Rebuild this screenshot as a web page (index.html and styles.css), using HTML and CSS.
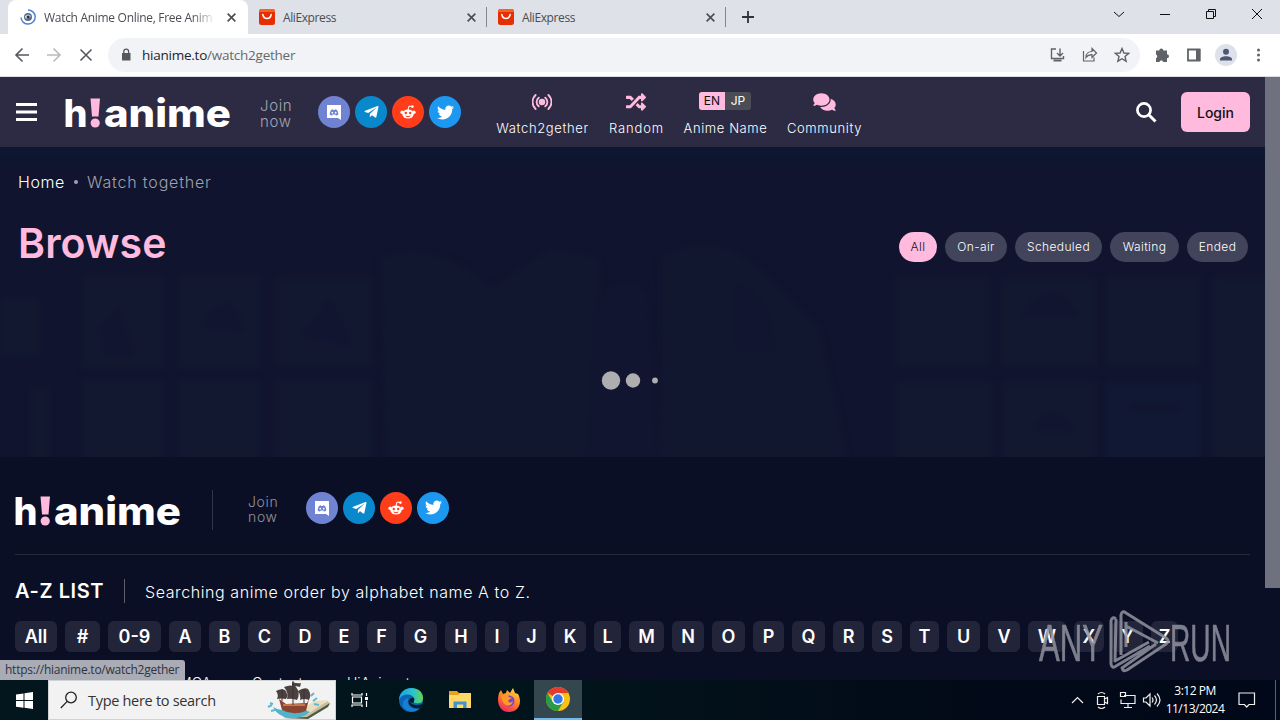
FILE: index.html
```html
<!DOCTYPE html>
<html lang="en">
<head>
<meta charset="utf-8">
<title>Watch together</title>
<link rel="stylesheet" href="styles.css">
</head>
<body>
<svg class="defs" width="0" height="0">
  <symbol id="twitter" viewBox="0 0 512 512"><path d="M459.37 151.716c.325 4.548.325 9.097.325 13.645 0 138.72-105.583 298.558-298.558 298.558-59.452 0-114.68-17.219-161.137-47.106 8.447.974 16.568 1.299 25.34 1.299 49.055 0 94.213-16.568 130.274-44.832-46.132-.975-84.792-31.188-98.112-72.772 6.498.974 12.995 1.624 19.818 1.624 9.421 0 18.843-1.3 27.614-3.573-48.081-9.747-84.143-51.98-84.143-102.985v-1.299c13.969 7.797 30.214 12.67 47.431 13.319-28.264-18.843-46.781-51.005-46.781-87.391 0-19.492 5.197-37.36 14.294-52.954 51.655 63.675 129.3 105.258 216.365 109.807-1.624-7.797-2.599-15.918-2.599-24.04 0-57.828 46.782-104.934 104.934-104.934 30.213 0 57.502 12.67 76.67 33.137 23.715-4.548 46.456-13.32 66.599-25.34-7.798 24.366-24.366 44.833-46.132 57.827 21.117-2.273 41.584-8.122 60.426-16.243-14.292 20.791-32.161 39.308-52.628 54.253z"/></symbol>
  <symbol id="telegram" viewBox="0 0 448 512"><path d="M446.7 98.6l-67.6 318.8c-5.1 22.5-18.4 28.1-37.3 17.5l-103-75.9-49.7 47.8c-5.5 5.500-10.100 10.100-20.700 10.100l7.400-104.900 190.900-172.500c8.300-7.400-1.800-11.500-12.900-4.100L117.800 284 16.200 252.200c-22.100-6.900-22.500-22.100 4.600-32.700L418.200 66.400c18.400-6.900 34.500 4.100 28.500 32.200z"/></symbol>
  <symbol id="reddit" viewBox="0 0 16 16"><ellipse cx="8" cy="10" rx="5.7" ry="4.5"/><circle cx="2.100" cy="8.300" r="1.700"/><circle cx="13.900" cy="8.300" r="1.700"/><path d="M8 6l1-4 3 .7" fill="none" stroke="#fff"/><circle cx="12.400" cy="2.600" r="1.300"/><circle cx="5.800" cy="9" r="1.200" fill="#ff3d1b"/><circle cx="10.200" cy="9" r="1.200" fill="#ff3d1b"/><path d="M5.600 12q2.400 1.500 4.800 0" fill="none" stroke="#ff3d1b"/></symbol>
  <symbol id="discord" viewBox="0 0 16 16"><path d="M1 1h14v15l-3-2H1z"/><path d="M3.700 10.500c0-3 1-5 3-5.300l.6.800h1.400l.6-.8c2 .3 3 2.300 3 5.300-1 .9-1.700 1-2.400 1l-.6-1H6.700l-.6 1c-.7 0-1.400-.1-2.400-1z" fill="#7083d3"/><circle cx="6.300" cy="8.700" r=".9"/><circle cx="9.700" cy="8.700" r=".9"/></symbol>
  <symbol id="ali" viewBox="0 0 16 16"><rect width="16" height="16" rx="2.500" fill="#e62e04"/><path d="M0 3V2.500A2.500 2.500 0 0 1 2.500 0h11A2.500 2.500 0 0 1 16 2.500V3z" fill="#f8641a"/><path d="M3.800 5.500c1 5.300 7.400 5.300 8.400 0" fill="none" stroke="#fff" stroke-width="1.500" stroke-linecap="round"/></symbol>
  <symbol id="x" viewBox="0 0 10 10"><path d="M1.500 1.500l7 7m0-7l-7 7" fill="none" stroke="#4a4d51" stroke-width="1.500"/></symbol>
  <symbol id="logo" viewBox="0 0 166 34">
    <text class="logo-text" y="30" fill="#fff" x="-1.500" textLength="24" lengthAdjust="spacingAndGlyphs">h</text>
    <path d="M25.500 1.500H35l-1.500 18h-6.500z" fill="#ffbade"/><circle cx="30.200" cy="26" r="4.600" fill="#ffbade"/>
    <text class="logo-text" y="30" fill="#fff" x="39" textLength="127" lengthAdjust="spacingAndGlyphs">anime</text>
  </symbol>
</svg>

<div class="tabs">
  <div class="tab tab-active">
    <svg width="16" height="16" viewBox="0 0 16 16" fill="none"><path d="M8 .9A7.100 7.100 0 1 1 1 8.500" stroke="#4e84d8" stroke-width="1.500"/><circle cx="8" cy="8" r="4" fill="#5b6a83"/><path d="M5 7q3-3 6 0-2 4-6 2z" fill="#c4cfe0"/><circle cx="8.200" cy="8" r="1.500" fill="#26303f"/></svg>
    <span class="tab-title t-watch">Watch Anime Online, Free Anim</span>
    <svg class="tab-x" width="11" height="11"><use href="#x"/></svg>
  </div>
  <div class="tab">
    <svg width="16" height="16"><use href="#ali"/></svg><span class="tab-title">AliExpress</span><svg class="tab-x" width="11" height="11"><use href="#x"/></svg>
  </div>
  <div class="tab">
    <svg width="16" height="16"><use href="#ali"/></svg><span class="tab-title">AliExpress</span><svg class="tab-x" width="11" height="11"><use href="#x"/></svg>
  </div>
  <svg class="plus" width="12" height="12" viewBox="0 0 12 12"><path d="M6 0v12M0 6h12" stroke="#303236" stroke-width="1.800"/></svg>
  <svg class="winctl" width="160" height="30" viewBox="0 0 160 30" fill="none" stroke="#111"><path d="M4 12l5 4.500 5-4.500M50 14.500h10M96.500 11.500h7v7h-7zM98.500 11.500v-2h7v7h-2M142 9l10 10m0-10l-10 10"/></svg>
</div>

<div class="toolbar">
  <svg width="90" height="20" viewBox="0 0 90 20" fill="none" stroke-width="1.600"><path d="M15 10H2m6.500-6.500L2 10l6.500 6.500" stroke="#55585c"/><path d="M33 10h13m-6.500-6.500L46 10l-6.500 6.500" stroke="#b9bbbe"/><path d="M66.500 4.500L77.500 15.500M77.500 4.500L66.500 15.500" stroke="#55585c"/></svg>
  <div class="address">
    <svg width="10" height="14" viewBox="0 0 10 14"><path d="M1 5h8.500v7.500H1z" fill="#55585d"/><path d="M2.800 5V3.500a2.400 2.400 0 0 1 4.800 0V5" fill="none" stroke="#55585d" stroke-width="1.300"/></svg>
    <span class="url"><b>hianime.to</b>/watch2gether</span>
    <svg class="address-icons" width="80" height="18" viewBox="0 0 80 18" fill="none" stroke="#5f6368" stroke-width="1.400"><path d="M6 3H1.500v9.500h12V10M10 2.500v7M7 7l3 3 3-3"/><path d="M3.500 14.500h8" stroke-width="2"/><path d="M33.500 5v10H44v-3.500M36 11.500c0-4 3-6 6-6V2.500L46.500 7 42 11.500V8.600c-2.500 0-4.500.7-6 2.900z" stroke-width="1.200"/><path d="M72 2.500l1.900 4.500 4.800.4-3.700 3.100 1.100 4.700-4.100-2.500-4.100 2.500 1.100-4.700-3.700-3.100 4.800-.4z"/></svg>
  </div>
  <svg class="ext" width="114" height="22" viewBox="0 0 114 22"><path d="M2 6.500h3.300a2 2 0 1 1 4 0H13v3.700a2 2 0 1 1 0 4V18H9.200a2 2 0 0 0-3.800 0H2v-3.800a2 2 0 0 0 0-3.700z" fill="#5f6368"/><path d="M34 5.500h11.500v11H34z" fill="none" stroke="#5f6368" stroke-width="1.800"/><path d="M42 5h4.500v12H42z" fill="#5f6368"/><circle cx="72" cy="11" r="11" fill="#dee1e9"/><circle cx="72" cy="7.700" r="3" fill="#4e5676"/><path d="M66 16.500v-1.200c0-4 12-4 12 0v1.200z" fill="#4e5676"/><g fill="#5f6368"><circle cx="104.500" cy="6" r="1.500"/><circle cx="104.500" cy="11" r="1.500"/><circle cx="104.500" cy="16" r="1.500"/></g></svg>
</div>

<div class="view">
  <div class="page">
    <header class="header">
      <svg class="burger" width="22" height="18" viewBox="0 0 22 18"><path d="M0 1.500h21M0 9h21M0 16.500h21" stroke="#fff" stroke-width="3"/></svg>
      <svg class="logo" width="166" height="34"><use href="#logo"/></svg>
      <div class="join">Join<br>now</div>
      <div class="social">
        <i class="dot discord"><svg width="16" height="16"><use href="#discord"/></svg></i>
        <i class="dot telegram"><svg width="15" height="16"><use href="#telegram"/></svg></i>
        <i class="dot reddit"><svg width="16" height="16"><use href="#reddit"/></svg></i>
        <i class="dot twitter"><svg width="17" height="17"><use href="#twitter"/></svg></i>
      </div>
      <nav class="menu">
        <div class="menu-item m1"><svg width="20" height="18" viewBox="0 0 20 18" fill="none" stroke="#ffbade" stroke-width="1.900" stroke-linecap="round"><circle cx="10" cy="9" r="2.300" fill="#ffbade"/><path d="M6.700 4.700a5.500 5.500 0 0 0 0 8.600M13.300 4.700a5.500 5.500 0 0 1 0 8.600M3.600 2a9.500 9.500 0 0 0 0 14M16.400 2a9.500 9.500 0 0 1 0 14"/></svg><span>Watch2gether</span></div>
        <div class="menu-item m2"><svg width="20" height="20" viewBox="0 0 512 512" fill="#ffbade"><path d="M504.971 359.029c9.373 9.373 9.373 24.569 0 33.941l-80 79.984c-15.010 15.010-40.971 4.490-40.971-16.971V416h-58.785a12.004 12.004 0 0 1-8.773-3.812l-70.556-75.596 53.333-57.143L352 336h32v-39.981c0-21.438 25.943-31.998 40.971-16.971l80 79.981zM12 176h84l52.781 56.551 53.333-57.143-70.556-75.596A11.999 11.999 0 0 0 122.785 96H12c-6.627 0-12 5.373-12 12v56c0 6.627 5.373 12 12 12zm372 0v39.984c0 21.460 25.961 31.980 40.971 16.971l80-79.984c9.373-9.373 9.373-24.569 0-33.941l-80-79.981C409.943 24.021 384 34.582 384 56.019V96h-58.785a12.004 12.004 0 0 0-8.773 3.812L96 336H12c-6.627 0-12 5.373-12 12v56c0 6.627 5.373 12 12 12h110.785c3.326 0 6.503-1.381 8.773-3.812L352 176h32z"/></svg><span>Random</span></div>
        <div class="menu-item m3"><div class="lang"><b>EN</b><em>JP</em></div><span>Anime Name</span></div>
        <div class="menu-item m4"><svg width="23" height="20" viewBox="0 0 576 512" fill="#ffbade"><path d="M416 192c0-88.400-93.100-160-208-160S0 103.600 0 192c0 34.300 14.100 65.900 38 92-13.400 30.200-35.500 54.200-35.800 54.500-2.200 2.300-2.800 5.700-1.500 8.700S4.800 352 8 352c36.600 0 66.900-12.300 88.700-25 32.200 15.700 70.300 25 111.300 25 114.900 0 208-71.600 208-160zm122 220c23.900-26 38-57.700 38-92 0-66.900-53.500-124.200-129.300-148.100.9 6.600 1.300 13.300 1.300 20.100 0 105.900-107.700 192-240 192-10.800 0-21.300-.8-31.700-1.900C207.800 439.600 281.800 480 368 480c41 0 79.100-9.200 111.300-25 21.800 12.700 52.100 25 88.700 25 3.200 0 6.100-1.900 7.300-4.800 1.300-2.900.7-6.300-1.500-8.700-.3-.3-22.400-24.200-35.800-54.500z"/></svg><span>Community</span></div>
      </nav>
      <svg class="search" width="21" height="21" viewBox="0 0 21 21" fill="none" stroke="#fff"><circle cx="8" cy="8" r="6.600" stroke-width="2.700"/><path d="M12.500 12.500l7 7" stroke-width="3"/></svg>
      <div class="login">Login</div>
    </header>

    <main class="browse">
      <svg class="tiles" width="1265" height="310" viewBox="0 0 1265 310">
        <path d="M-5-5h1275v19H-5z" fill="#0d1731"/>
        <g fill="#131831">
          <path d="M82 126h82v96H82zM178 126h83v96h-83zM82 232h82v85H82zM178 232h83v85h-83zM895 128h96v92h-96zM1000 130h98v90h-98zM1106 128h94v92h-94zM1212 130h60v187h-60zM895 234h98v83h-98zM1002 234h96v83h-96zM0 150h40v60H0zM30 240h20v80H30z"/>
          <path d="M273 130h100v90H273zM273 232h100v85H273z"/>
          <path d="M380 110q60-20 110 30l60-40 50 10 10 210H385zM660 110q50-30 100 10l60 60 30 137H660z" opacity=".7"/>
          <path d="M1104 234h97v83h-97z" fill="#101833"/>
        </g>
        <g fill="#111530"><path d="M100 180l20-20 15 50h-30zM200 180q30-50 45 5zM1020 170q30-50 60 0zM300 190l30-40 25 50zM1030 285q25-40 45 0zM1130 255h50v10h-50zM600 150q25-35 50 0l10 170h-70zM740 140q30 20 30 60h-30z"/></g>
      </svg>
      <div class="crumbs"><span class="home">Home</span><i></i><span class="here">Watch together</span></div>
      <div class="title-row">
        <h1>Browse</h1>
        <div class="pills"><span class="pill on" style="width:38px">All</span><span class="pill" style="width:62px">On-air</span><span class="pill" style="width:87px">Scheduled</span><span class="pill" style="width:69px">Waiting</span><span class="pill" style="width:61px">Ended</span></div>
      </div>
      <svg class="loading" width="60" height="20" viewBox="0 0 60 20" fill="#aeaeb0"><circle cx="10" cy="10.500" r="9.200"/><circle cx="32" cy="10.500" r="7.200"/><circle cx="54" cy="10.500" r="2.900"/></svg>
    </main>

    <footer class="footer">
      <div class="foot-top">
        <svg class="logo" width="166" height="34"><use href="#logo"/></svg>
        <div class="join foot-join">Join<br>now</div>
        <div class="social">
          <i class="dot discord"><svg width="16" height="16"><use href="#discord"/></svg></i>
          <i class="dot telegram"><svg width="15" height="16"><use href="#telegram"/></svg></i>
          <i class="dot reddit"><svg width="16" height="16"><use href="#reddit"/></svg></i>
          <i class="dot twitter"><svg width="17" height="17"><use href="#twitter"/></svg></i>
        </div>
      </div>
      <div class="az-head"><b>A-Z LIST</b><span>Searching anime order by alphabet name A to Z.</span></div>
      <div class="az"><span style="width:42px">All</span><span style="width:35px">#</span><span style="width:53px">0-9</span><span style="width:32px">A</span><span style="width:31px">B</span><span style="width:33px">C</span><span style="width:32px">D</span><span style="width:30px">E</span><span style="width:29px">F</span><span style="width:33px">G</span><span style="width:32px">H</span><span style="width:24px">I</span><span style="width:29px">J</span><span style="width:32px">K</span><span style="width:27px">L</span><span style="width:35px">M</span><span style="width:32px">N</span><span style="width:33px">O</span><span style="width:31px">P</span><span style="width:33px">Q</span><span style="width:31px">R</span><span style="width:30px">S</span><span style="width:29px">T</span><span style="width:33px">U</span><span style="width:32px">V</span><span style="width:38px">W</span><span style="width:30px">X</span><span style="width:31px">Y</span><span style="width:27px">Z</span></div>
      <div class="links"><span style="width:154px">Terms of service</span><span style="width:83px">DMCA</span><span style="width:95px">Contact</span><span>HiAnime.to</span></div>
    </footer>
  </div>
  <div class="scroll"><div class="thumb"></div></div>
  <div class="status">https://hianime.to/watch2gether</div>
  <svg class="mark" width="200" height="68" viewBox="0 0 200 68" fill="none">
    <text class="mark-text" x="3" y="52" textLength="64" lengthAdjust="spacingAndGlyphs">ANY</text>
    <text class="mark-text" x="134" y="52" textLength="61" lengthAdjust="spacingAndGlyphs">RUN</text>
    <path d="M80 10q-4-3-5 2v43q1 5 5 2l34-20M80 10l-1 42 34-19M85 46V6q1-5 5-2l40 25q4 3 0 6l-39 26q-4 2-5-2l34-24M90 13v25M90 17l32 17" stroke="#92939f" stroke-width="3" stroke-linejoin="round"/>
  </svg>
</div>

<div class="taskbar">
  <div class="start"><svg width="17" height="17" viewBox="0 0 17 17" fill="#fff"><path d="M0 2.400l7.500-1v6.700H0zM8.500 1.200L17 0v8.100H8.500zM0 9.100h7.500v6.700L0 14.700zM8.500 9.100H17V17l-8.500-1.200z"/></svg></div>
  <div class="find">
    <svg width="18" height="18" viewBox="0 0 18 18" fill="none" stroke="#222" stroke-width="1.300"><circle cx="11" cy="6.500" r="5.300"/><path d="M7.200 10.400L.8 17"/></svg>
    <span>Type here to search</span>
    <svg class="ship" width="64" height="38" viewBox="0 0 64 38"><path d="M28 33l18-5 15-8 2 3-21 14H16z" fill="#cbbf9c"/><path d="M16 37l24-1 23-14-2 4-20 12z" fill="#4c5a48"/><path d="M32 31l15-11 14-1-20 14z" fill="#e9dfc0"/><path d="M6 26q8 5 16 2t21 3q-8 7-21 6Q10 35 6 26z" fill="#4fb3cb"/><path d="M12 18l7 5 21-1 2-4-3 12q-13 5-24-1z" fill="#8c4432"/><path d="M16 23h22v2H16z" fill="#c6764d"/><path d="M9 10q5-3 9-1 4 5 1 9-5-1-9 0 2-4-1-8zM17 6q7-3 12 0 5 6 1 13-6-2-10-1 2-6-3-12zM31 10q6-4 10-2 4 6 1 11-5-2-9 0 1-5-2-9zM25 1q6 2 9 1l-1 4q-6-2-8 2z" fill="#4a4140"/><path d="M26 0v24M15 8v12M37 8v14" stroke="#3b3230"/><path d="M1 26l4-2m-1 6l4-1M3 22l3 1M44 15l3-3m-1 8l4-3m-3 6l5 1" stroke="#62b8d2" stroke-width="2"/></svg>
  </div>
  <div class="apps">
    <div class="app app-view"><svg width="18" height="16" viewBox="0 0 18 16" fill="none" stroke="#fff" stroke-width="1.200"><path d="M1 1v2h10V1M1 15v-2h10v2M1.500 5h9v6h-9zM15.500 1v3m0 8v3M15.500 9v3"/><path d="M14 5h3v3h-3z" fill="#fff" stroke="none"/></svg></div>
    <div class="app"><svg width="24" height="24" viewBox="0 0 24 24"><defs><linearGradient id="eg" x1="0" x2="1"><stop stop-color="#1ba0e2"/><stop offset=".6" stop-color="#2cc4c8"/><stop offset="1" stop-color="#66d64b"/></linearGradient></defs><circle cx="12" cy="12" r="12" fill="#0c64b8"/><path d="M0 12C1-4 24-3 24 10c0 5-4 6-8 5-3-1 0-2-1-5-2-5-12-5-15 2z" fill="url(#eg)"/><path d="M10 10c-4 6 2 13 11 10-5 6-15 4-17-2-1-4 2-8 6-8z" fill="#1680d4"/><path d="M10.500 10c-1 5 4 9 13 6l1 3-2 1C13 22 7 16 10.500 10z" fill="#06202b"/><path d="M10.500 12q1-3 4.500-2 1 2-.5 5-4 0-4-3z" fill="#061c27"/></svg></div>
    <div class="app"><svg width="22" height="20" viewBox="0 0 22 20"><path d="M0 1h8l2 2h12v5H0z" fill="#e8a21c"/><path d="M0 5h9l2-2h11v15H0z" fill="#ffd868"/><path d="M4.500 18v-6.500h13V18h-3.300v-3.500H8V18z" fill="#3f93cf"/></svg></div>
    <div class="app"><svg width="24" height="24" viewBox="0 0 24 24"><defs><linearGradient id="fg" x1=".8" y1="0" x2=".3" y2="1"><stop stop-color="#ffe14a"/><stop offset=".45" stop-color="#ff8a24"/><stop offset="1" stop-color="#f3245d"/></linearGradient></defs><path d="M2 5l2-3 2 4 3-1 1-3 3 3 3-5 2 5 3 1c5 9 0 18-9 18S-1 15 2 5z" fill="url(#fg)"/><circle cx="12" cy="13" r="5.500" fill="#7a42d9"/><path d="M4 8q5-4 8 1l3 1q-3 1-4 3 2 3 5 0c-1 6-8 6-10 1z" fill="#ff9a26"/></svg></div>
    <div class="app app-on"><svg width="24" height="24" viewBox="0 0 24 24"><circle cx="12" cy="12" r="12" fill="#fbc116"/><path d="M12 12L1.600 6A12 12 0 0 1 22.400 6H12z" fill="#e33b2e"/><path d="M1.600 6A12 12 0 0 0 12 24l5.200-9L12 12 6.800 15z" fill="#289b48"/><circle cx="12" cy="12" r="6" fill="#fff"/><circle cx="12" cy="12" r="4.700" fill="#3478e8"/></svg></div>
  </div>
  <svg class="tray" width="90" height="20" viewBox="0 0 90 20" fill="none" stroke="#eee" stroke-width="1.200"><path d="M1 13l5.500-5.500L12 13M26.500 6.500h7v8h-7zM33.500 9l3-1.500v6l-3-1.500M27 4q3.500-3 7 0M27 17q3.500 3 7 0M53 5.500h11v8H50v-4M49.500 2.500h5v4h-5zM57 13.500v4M53 17.500h8M72.500 8H75l4-4v12l-4-4h-2.500zM81 7.500q2 2.500 0 5M83.500 5.500q4 4.500 0 9M86 3.500q6 6.500 0 13"/></svg>
  <div class="clock"><span>3:12 PM</span><span>11/13/2024</span></div>
  <svg class="note" width="18" height="18" viewBox="0 0 18 18" fill="none" stroke="#eee" stroke-width="1.200"><path d="M1 2h15.500v11.500H11L8.700 16l-2.300-2.500H1z"/></svg>
</div>
</body>
</html>
```
FILE: styles.css
```css
* { box-sizing: border-box; }
body { margin: 0; width: 1280px; height: 720px; overflow: hidden; display: flex; flex-direction: column; font-family: Inter, "Liberation Sans", sans-serif; background: #0b0f26; white-space: nowrap; }
svg { flex: none; display: block; }
.defs { position: absolute; }
i, em { font-style: normal; }

.tabs { flex: none; height: 34px; background: #dee1e7; display: flex; align-items: center; font: 12px "Open Sans", "Noto Sans", sans-serif; color: #4a4d52; }
.tab { width: 239px; height: 34px; display: flex; align-items: center; padding: 0 10px 0 11px; position: relative; }
.tab + .tab::after { content: ""; position: absolute; right: 0; top: 7px; height: 20px; width: 1px; background: #84878c; }
.tab-active { width: 240px; margin-left: 8px; background: #fff; border-radius: 8px 8px 0 0; padding-left: 12px; }
.tab-title { margin-left: 8px; width: 172px; letter-spacing: -.4px; }
.t-watch { letter-spacing: -.3px; -webkit-mask-image: linear-gradient(90deg, #000 86%, transparent); mask-image: linear-gradient(90deg, #000 86%, transparent); }
.tab-x { margin-left: auto; }
.tab-active .tab-x { margin-right: 1px; }
.plus { margin-left: 16px; }
.winctl { margin-left: auto; margin-right: 10px; align-self: flex-start; }

.toolbar { flex: none; height: 43px; background: #fff; border-bottom: 1px solid #dcdde1; display: flex; align-items: center; padding-left: 14px; }
.address { width: 1032px; height: 34px; margin-left: 4px; border-radius: 17px; background: #f1f3f6; display: flex; align-items: center; padding: 0 10px 0 13px; }
.url { margin-left: 11px; font: 13.500px "Open Sans", "Noto Sans", sans-serif; letter-spacing: -.24px; color: #65696e; }
.url b { font-weight: 400; color: #222427; }
.address-icons { margin-left: auto; }
.ext { margin-left: 14px; }

.view { flex: none; height: 603px; display: flex; position: relative; overflow: hidden; }
.page { width: 1265px; }
.scroll { width: 15px; background: #0b0f26; }
.thumb { height: 511px; background: #70717e; }

.header { height: 70px; background: #2d2b44; display: flex; align-items: center; padding: 0 15px 0 16px; }
.logo { margin-left: 27px; margin-top: 3px; overflow: visible; }
.logo-text { font: 800 38px Inter, sans-serif; }
.join { width: 58px; margin-left: 29px; padding-top: 3px; font-size: 15px; font-weight: 300; line-height: 16px; color: #a5a4b1; letter-spacing: .65px; }
.social { display: flex; gap: 5px; }
.dot { width: 32px; height: 32px; border-radius: 50%; display: flex; align-items: center; justify-content: center; fill: #fff; }
.discord { background: #7083d3; }
.telegram { background: #0a88cc; }
.reddit { background: #ff3d1b; }
.twitter { background: #1d98f0; }
.menu { display: flex; gap: 20px; margin-left: 35px; color: #fff; font-size: 13px; font-weight: 300; }
.menu-item { display: flex; flex-direction: column; align-items: center; height: 48px; justify-content: space-between; }
.menu-item > svg { height: 20px; margin-top: 4px; margin-right: 2px; }
.m1 { width: 93px; letter-spacing: .64px; }
.m2 { width: 55px; letter-spacing: .85px; }
.m3 { width: 83px; letter-spacing: .6px; }
.m4 { width: 75px; letter-spacing: .62px; }
.m4 > svg { margin-right: 0; }
.lang { display: flex; width: 52px; height: 18px; margin-top: 4px; margin-right: 1px; border-radius: 3px; overflow: hidden; background: #4a4e54; font: 12px/18px Inter, sans-serif; letter-spacing: 0; text-align: center; }
.lang b { font-weight: 400; width: 26px; background: #ffbade; color: #111; }
.lang em { width: 26px; }
.search { margin-left: auto; margin-right: 24px; }
.login { width: 69px; height: 40px; border-radius: 6px; background: #ffbade; color: #111; font-size: 14px; font-weight: 500; text-align: center; line-height: 42px; }

.browse { height: 310px; background: #10142e; position: relative; overflow: hidden; padding: 25px 17px 0 18px; }
.tiles { position: absolute; left: 0; top: 0; overflow: visible; filter: blur(2.500px); }
.crumbs { position: relative; display: flex; align-items: center; height: 20px; font-size: 16px; font-weight: 300; color: #a0a1ac; }
.home { color: #fff; width: 47px; letter-spacing: .6px; }
.crumbs i { width: 4px; height: 4px; border-radius: 50%; background: #a0a1ac; margin: 0 9px; }
.here { letter-spacing: .82px; }
.title-row { position: relative; display: flex; justify-content: space-between; margin-top: 25px; height: 52px; align-items: center; }
h1 { margin: 0; font-size: 41px; font-weight: 600; color: #ffbade; line-height: 52px; letter-spacing: .1px; }
.pills { display: flex; gap: 8px; margin-top: 8px; }
.pill { height: 30px; line-height: 30px; border-radius: 15px; background: #41445b; color: #fff; text-align: center; font-size: 12px; font-weight: 300; letter-spacing: .38px; }
.pill.on { background: #ffbade; color: #111; }
.loading { position: relative; margin: 101px auto 0 583px; }

.footer { height: 223px; overflow: hidden; padding: 0 15px; background: #0b0f26; color: #fff; }
.foot-top { height: 98px; display: flex; align-items: center; border-bottom: 1px solid #252a3d; padding-top: 4px; }
.foot-top .logo { margin-left: 0; margin-top: 8px; }
.foot-join { width: 94px; height: 40px; border-left: 1px solid #30354a; margin-left: 31px; margin-top: 4px; padding: 4px 0 0 35px; font-size: 14px; line-height: 15px; color: #92949f; }
.az-head { display: flex; align-items: center; height: 24px; margin-top: 24px; }
.az-head b { font-size: 20px; font-weight: 600; width: 109px; letter-spacing: .6px; }
.az-head span { border-left: 1px solid #5a5d6c; padding-left: 20px; height: 24px; line-height: 27px; font-size: 16px; font-weight: 300; letter-spacing: .58px; }
.az { display: flex; gap: 8px; margin-top: 18px; }
.az span { flex: none; height: 31px; border-radius: 6px; background: #22253a; text-align: center; line-height: 31px; font-size: 18px; font-weight: 600; }
.links { display: flex; margin-top: 21px; font-size: 14px; font-weight: 300; line-height: 20px; }

.status { position: absolute; left: 0; bottom: 0; width: 185px; height: 20px; background: #a9abb5; border-radius: 0 3px 0 0; padding-left: 5px; font: 12px/20px "Open Sans", "Noto Sans", sans-serif; letter-spacing: -.25px; color: #30343e; }
.mark { position: absolute; left: 1036px; top: 532px; opacity: .85; }
.mark-text { font: 52px "Liberation Sans Narrow", "Liberation Sans", sans-serif; fill: #92939f; stroke: #92939f; stroke-width: .6px; }

.taskbar { flex: none; height: 40px; background: linear-gradient(90deg, #03161d, #02141b 45%, #020a18 75%, #010819); display: flex; align-items: center; }
.start { width: 48px; display: flex; justify-content: center; }
.find { width: 288px; height: 40px; background: #f2f2f2; border: 1px solid #cfd2d4; display: flex; align-items: center; padding: 0 4px 0 11px; font: 14.500px "Open Sans", "Noto Sans", sans-serif; color: #333; }
.find span { margin-left: 10px; letter-spacing: -.3px; }
.ship { margin-left: auto; }
.apps { display: flex; gap: 1px; }
.app { width: 48px; height: 40px; display: flex; align-items: center; justify-content: center; }
.app-view { margin-right: 2px; }
.app-on { background: #34474f; border-bottom: 2px solid #76b9ed; }
.tray { margin-left: auto; }
.clock { width: 68px; display: flex; flex-direction: column; align-items: center; font: 12px/18px "Open Sans", "Noto Sans", sans-serif; color: #fff; letter-spacing: -.5px; }
.note { margin-left: 9px; margin-right: 19px; }
.taskbar::after { content: ""; width: 1px; height: 40px; margin-right: 4px; background: #5b606b; }
```
